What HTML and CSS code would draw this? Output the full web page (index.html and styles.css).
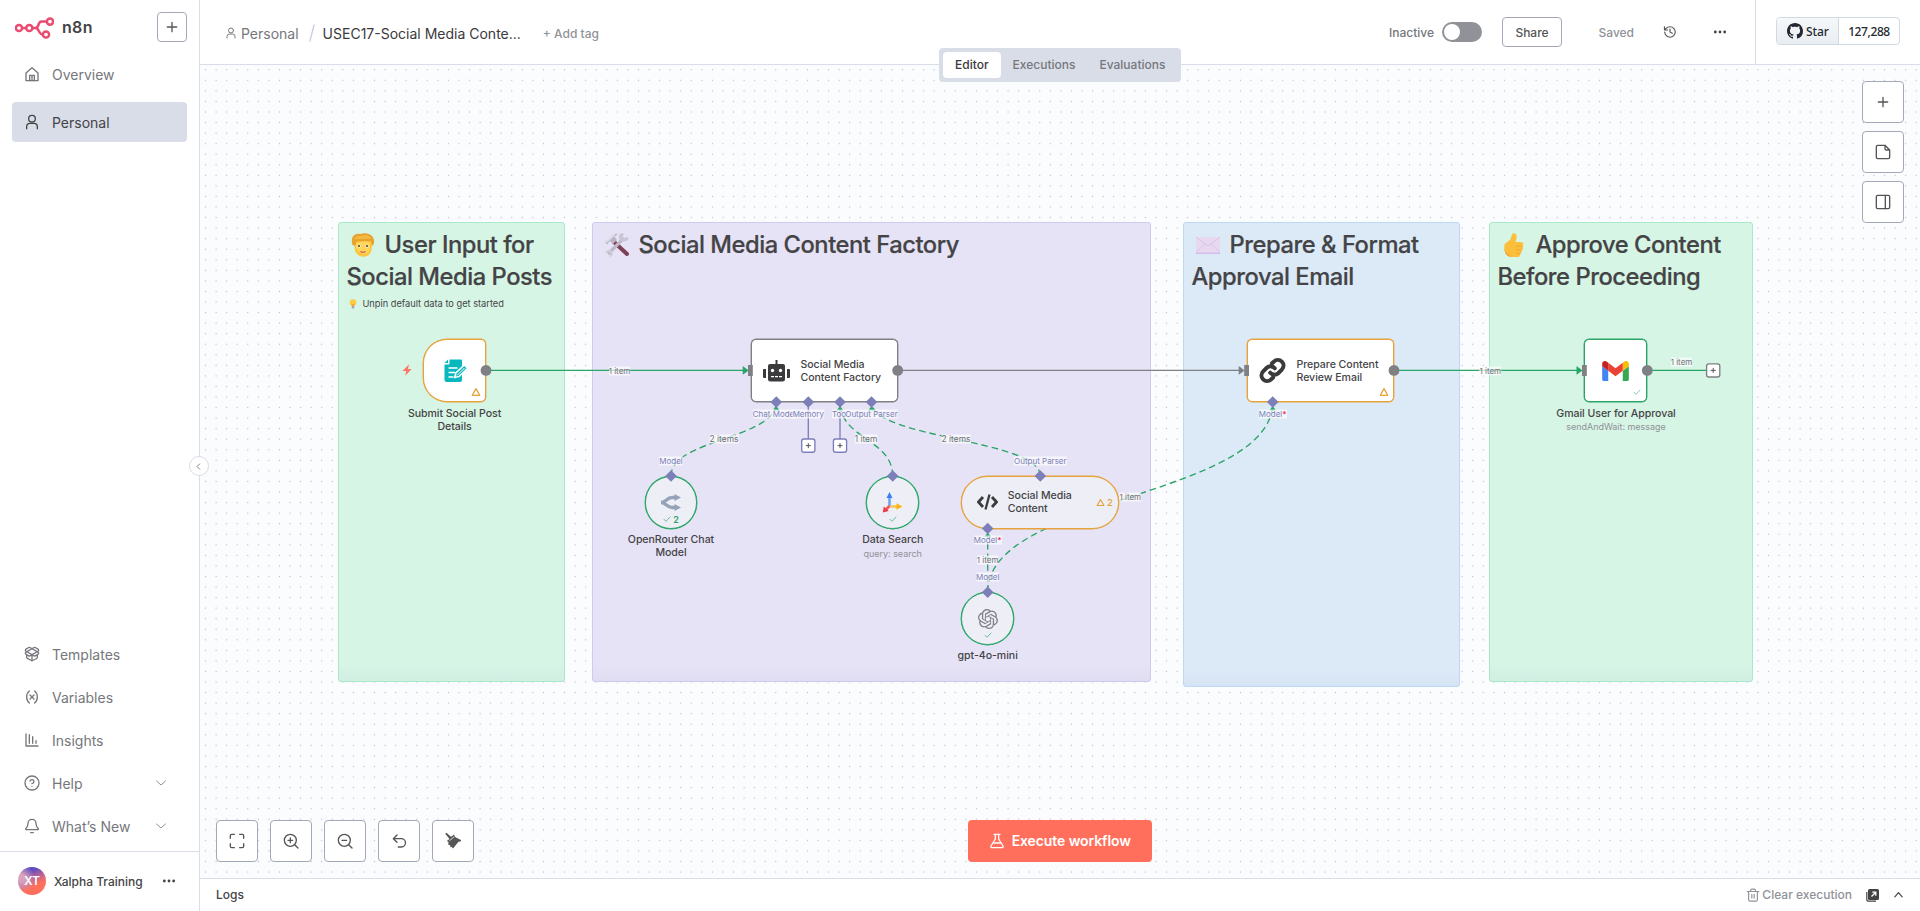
FILE: index.html
```html
<!DOCTYPE html>
<html lang="en">
<head>
<meta charset="utf-8">
<title>USEC17-Social Media Content - n8n</title>
<link rel="stylesheet" href="styles.css">
</head>
<body>
<svg class="defs" aria-hidden="true">
  <symbol id="i-plus" viewBox="0 0 24 24"><path d="M5 12h14M12 5v14"/></symbol>
  <symbol id="i-user" viewBox="0 0 24 24"><circle cx="12" cy="7" r="5"/><path d="M4 22v-3a5 5 0 0 1 5-5h6a5 5 0 0 1 5 5v3"/></symbol>
  <symbol id="i-chev" viewBox="0 0 24 24"><path d="m3 8 9 8 9-8"/></symbol>
  <symbol id="i-dots" viewBox="0 0 24 24"><g fill="currentColor" stroke="none"><circle cx="4" cy="12" r="2.400"/><circle cx="12" cy="12" r="2.400"/><circle cx="20" cy="12" r="2.400"/></g></symbol>
  <symbol id="i-warn" viewBox="0 0 24 24"><path d="M12 4 21 20H3Z"/></symbol>
  <symbol id="i-check" viewBox="0 0 24 24"><path d="m3 13 6 6L21 6"/></symbol>
</svg>
<div class="app">
  <aside class="sidebar">
    <div class="brand">
      <svg class="logo" viewBox="0 0 39 22" fill="none" stroke="#ea4b71" stroke-width="2.500"><circle cx="4" cy="11" r="3.100"/><circle cx="14.300" cy="11" r="3.100"/><circle cx="35" cy="4.600" r="3.100"/><circle cx="31" cy="17.500" r="3.100"/><path d="M7.100 11h4.100M17.400 11h3c4.500 0 1.500-6.400 6.500-6.400h5M20.400 11c4.500 0 2.500 6.500 7.500 6.500"/></svg>
      <span class="brand-name">n8n</span>
      <button class="btn add"><svg class="ic s16"><use href="#i-plus"/></svg></button>
    </div>
    <nav class="menu top">
      <a class="item"><svg class="ic s16" viewBox="0 0 24 24"><path d="M3 10.500 12 2.500l9 8V22H3Z"/><path d="M8.500 22v-8h7v8M12 15v7"/></svg><span>Overview</span></a>
      <a class="item active"><svg class="ic s16"><use href="#i-user"/></svg><span>Personal</span></a>
    </nav>
    <nav class="menu bottom">
      <a class="item"><svg class="ic s16" viewBox="0 0 24 24"><path d="M12 22v-9M15.170 2.210a1.670 1.670 0 0 1 1.630 0L21 4.570a1.930 1.930 0 0 1 0 3.360L8.820 14.790a1.660 1.660 0 0 1-1.640 0L3 12.430a1.930 1.930 0 0 1 0-3.360z"/><path d="M20 13v3.870a2.060 2.060 0 0 1-1.110 1.830l-6 3.080a1.930 1.930 0 0 1-1.780 0l-6-3.080A2.060 2.060 0 0 1 4 16.870V13"/><path d="M21 12.430a1.930 1.930 0 0 0 0-3.360L8.830 2.200a1.640 1.640 0 0 0-1.630 0L3 4.570a1.930 1.930 0 0 0 0 3.360l12.180 6.860a1.640 1.640 0 0 0 1.630 0z"/></svg><span>Templates</span></a>
      <a class="item"><svg class="ic s16" viewBox="0 0 24 24"><path d="M8 21s-4-3-4-9 4-9 4-9M16 3s4 3 4 9-4 9-4 9M15 9l-6 6M9 9l6 6"/></svg><span>Variables</span></a>
      <a class="item"><svg class="ic s16" viewBox="0 0 24 24"><path d="M3 3v18h18M8 4v13M13 7v10M18 13v4"/></svg><span>Insights</span></a>
      <a class="item"><svg class="ic s16" viewBox="0 0 24 24"><circle cx="12" cy="12" r="10.500"/><path d="M9.090 9a3 3 0 0 1 5.830 1c0 2-3 3-3 3M12 17h.01"/></svg><span>Help</span><svg class="ic chev"><use href="#i-chev"/></svg></a>
      <a class="item"><svg class="ic s16" viewBox="0 0 24 24"><path d="M10 22h4M3.300 15.300A1 1 0 0 0 4 17.500h16a1 1 0 0 0 .740-2.200C19.400 14 18 12 18 8A6 6 0 0 0 6 8c0 4-1.400 6-2.700 7.300"/></svg><span>What’s New</span><svg class="ic chev"><use href="#i-chev"/></svg></a>
    </nav>
    <div class="user">
      <span class="avatar">XT</span><span class="uname">Xalpha Training</span><svg class="ic s14"><use href="#i-dots"/></svg>
    </div>
    <button class="collapse"><svg class="ic" viewBox="0 0 24 24"><path d="m15 5-7 7 7 7"/></svg></button>
  </aside>
  <main class="main">
    <header class="header">
      <div class="crumbs">
        <svg class="ic cu"><use href="#i-user"/></svg><span class="proj">Personal</span>
        <svg class="slash" viewBox="0 0 6 18"><path d="M5.200.5.800 17.500"/></svg>
        <span class="wf">USEC17-Social Media Conte...</span><span class="tag">+ Add tag</span>
      </div>
      <div class="actions">
        <span class="inactive">Inactive</span><span class="toggle"></span>
        <button class="btn share">Share</button><span class="saved">Saved</span>
        <svg class="ic hist" viewBox="0 0 24 24"><path d="M3 12a9 9 0 1 0 9-9 9.750 9.750 0 0 0-6.740 2.740L2.500 8.500M2.500 3v5.500H8M12 7v5l4 2"/></svg>
        <svg class="ic s14 more"><use href="#i-dots"/></svg>
      </div>
      <div class="gh">
        <div class="ghb"><span class="star"><svg viewBox="0 0 16 16" width="16" height="16"><path fill="#24292f" d="M8 0C3.580 0 0 3.580 0 8c0 3.540 2.290 6.530 5.470 7.590.4.070.55-.17.55-.38 0-.19-.01-.82-.01-1.490-2.010.37-2.530-.49-2.690-.94-.09-.23-.48-.94-.82-1.130-.28-.15-.68-.52-.01-.53.63-.01 1.080.58 1.230.82.72 1.210 1.870.87 2.330.66.07-.52.28-.87.51-1.070-1.780-.2-3.640-.89-3.640-3.950 0-.87.31-1.590.82-2.150-.08-.2-.36-1.020.08-2.120 0 0 .67-.21 2.200.82.64-.18 1.320-.27 2-.27s1.360.09 2 .27c1.530-1.040 2.200-.82 2.200-.82.44 1.100.16 1.920.08 2.120.51.56.82 1.270.82 2.150 0 3.070-1.870 3.750-3.650 3.950.29.25.54.73.54 1.480 0 1.070-.01 1.930-.01 2.200 0 .21.15.46.55.38A8.010 8.010 0 0 0 16 8c0-4.420-3.580-8-8-8"/></svg>Star</span><span class="count">127,288</span></div>
      </div>
      <div class="tabs"><span class="tab on">Editor</span><span class="tab">Executions</span><span class="tab">Evaluations</span></div>
    </header>
    <section class="canvas">
      <svg class="grid" width="1720" height="813"><defs><pattern id="dots" x="0.260" y="-0.500" width="10.560" height="10.556" patternUnits="userSpaceOnUse"><circle cx="5.280" cy="5.280" r="0.640" fill="#b8bbc3"/></pattern></defs><rect width="1720" height="813" fill="url(#dots)"/></svg>

      <div class="sticky green st1">
        <h2><svg class="emoji" viewBox="0 0 24 24"><path fill="#fbc63d" d="M3 8h18.500l-1 9c-1 4.500-4.500 6.800-8 6.800S5 21.500 4 17.500Z"/><path fill="#ffd65a" d="M5 10c4 0 6-2 9-3l5 3v4c0 5-3 7-6.500 7S6 18 5 14Z"/><path fill="#e8a22e" d="M1.500 12C-1 4 4 0 9 1c6-2 13 0 14 6 .500 3-.500 4-1 6-1-1-1.500-2.500-2.500-5-5 1-10-.500-14 .500l-1.500 4.500Z"/><path fill="#f4b940" d="M3 6c4-5 9-2 11-4 3 0 6 2 6 4-5-1-11 1-17 0Z"/><circle cx="8" cy="13" r="1.500" fill="#fff"/><circle cx="16" cy="13" r="1.500" fill="#fff"/><circle cx="8" cy="13" r="1.100" fill="#5c3a30"/><circle cx="16" cy="13" r="1.100" fill="#5c3a30"/><path d="M9.500 18.500q2.500 1.500 5 0" fill="none" stroke="#d9475c" stroke-width="1.200"/></svg>User Input for<br>Social Media Posts</h2>
        <p><svg class="bulb" viewBox="0 0 8 10"><circle cx="4" cy="3.500" r="3.300" fill="#fcca45"/><path d="M2.600 5h2.800v2H2.600Z" fill="#f2a93b"/><path d="M2.800 7h2.400v2.500H2.800Z" fill="#a7a3b5"/></svg>Unpin default data to get started</p>
      </div>
      <div class="sticky purple st2">
        <h2><svg class="emoji" viewBox="0 0 24 24"><path d="m9 9 13 12" stroke="#7d4054" stroke-width="4" stroke-linecap="round"/><path d="M3 21 19 5" stroke="#bdb9c9" stroke-width="3.200"/><path d="M17 0c-3 1-4 4-2.500 6.500 2 2.500 6 3 9-.5l-1-2-3.500 1-1.500-1.500L19 1Z" fill="#c9c5d4"/><path d="M0 20c1-3 4-4 6.500-2.500 2 2 2 5-1 6.500l-1-.500L5.500 20 4 19Z" fill="#d0ccdb"/><path d="M0 9 9 1l4-.500L9.500 4 12 7 8 11 5 8 2 11.500Z" fill="#b9b4c4"/><path d="M0 9 9 1l1.500 1L2 9.500Z" fill="#e2dfea"/></svg>Social Media Content Factory</h2>
      </div>
      <div class="sticky blue st3">
        <h2><svg class="emoji" viewBox="0 0 24 24"><path fill="#e8d9f1" d="M0 4h24v17H0Z"/><path fill="#d6bdec" d="M0 19.500h24V21H0Z"/><path d="m0 4 12 9 12-9M0 19l9-8M24 19l-9-8" stroke="#cfbbe0" stroke-width=".7" fill="none"/></svg>Prepare &amp; Format<br>Approval Email</h2>
      </div>
      <div class="sticky green st4">
        <h2><svg class="emoji" viewBox="0 0 24 24"><path fill="#fbbf3a" d="M2.500 12c0-2 4-3 6-6L10 1.500c.5-2 4-1.500 4.500 1 .400 2.500-.5 4.500-1 6.500h5c3 0 3.500 3 2 4 1.500 1.500.5 3.500-1 4 1 1.500 0 3.500-1.500 3.500C18.500 23 17 24 15 24H9c-4-.5-7.500-4-6.500-12Z"/><path fill="#f0a031" d="M14 12.800h6v.8h-6Zm0 3.700h5.500v.8h-5.500Zm0 3.500h4.500v.8h-4.500ZM2.500 14c0 4 3 8 7 9.500H7c-3-1-5-5.500-4.500-9.500Z"/></svg>Approve Content<br>Before Proceeding</h2>
      </div>

      <svg class="edges" viewBox="200 65 1720 813" width="1720" height="813" fill="none" stroke-width="1.350">
        <g stroke="#2aa568">
          <path d="M486 370.400H744M1394 370.400H1579M1647 370.400H1706"/>
          <g stroke-dasharray="6.600 4">
            <path d="M671 476C671 439 776.300 439 776.300 402"/>
            <path d="M892.700 476C892.700 439 840 439 840 402"/>
            <path d="M1040.300 476C1040.300 439 871.500 439 871.500 402"/>
            <path d="M987.700 592V528"/>
            <path d="M987.700 592C987.700 497 1272.700 497 1272.700 402"/>
          </g>
        </g>
        <path stroke="#7f8084" d="M897.700 370.400H1240"/>
        <path stroke="#7d7fb8" d="M808.300 402V439M840 402V439"/>
        <g fill="#2aa568"><path d="m742.700 366 6 4.400-6 4.400ZM1576.500 366l6 4.400-6 4.400ZM773 410.500l3.300-4.500 3.300 4.500ZM836.700 410.500l3.300-4.500 3.300 4.500ZM868.200 410.500l3.300-4.500 3.300 4.500ZM1269.400 410.500l3.300-4.500 3.300 4.500ZM984.400 537l3.300-4.500 3.300 4.500Z"/></g>
        <path fill="#7f8084" d="m1238.700 366 6 4.400-6 4.400Z"/>
      </svg>

      <span class="lbl l1">1 item</span><span class="lbl l2">1 item</span><span class="lbl l3">1 item</span>
      <span class="lbl l4">2 items</span><span class="lbl l5">1 item</span><span class="lbl l6">2 items</span>
      <span class="lbl l7">1 item</span><span class="lbl l8">1 item</span>
      <span class="lbl v p1">Chat Model</span><span class="lbl v p2">Memory</span><span class="lbl v p3">Tool</span><span class="lbl v p4">Output Parser</span>
      <span class="lbl v p5">Model</span><span class="lbl v p6">Output Parser</span><span class="lbl v p7">Model<b>*</b></span><span class="lbl v p8">Model</span><span class="lbl v p9">Model<b>*</b></span>

      <div class="node submit warn">
        <svg width="24" height="24" viewBox="0 0 24 24"><path fill="#08b8bd" d="M5.500.5H17a1 1 0 0 1 1 1V21a2 2 0 0 1-2 2H2.500a2 2 0 0 1-2-2V5.500h4a1 1 0 0 0 1-1Z"/><path d="M.5 4 4 .5V4Z" fill="#08b8bd"/><path d="M4.500 9h9M4.500 13.500h6.500M4.500 18h5" stroke="#fff" stroke-width="1.500"/><path d="m10.800 18.500 1-4.500 8.500-8 3.200 3.200-8.200 8.200Z" fill="#08b8bd" stroke="#fff" stroke-width="1.500"/><path d="m13 16.500 7.500-7.500" stroke="#fff"/></svg>
        <svg class="ic stat"><use href="#i-warn"/></svg>
      </div>
      <svg class="bolt" viewBox="0 0 10 12"><path fill="#ff7769" d="M7 .3.500 7h3.700l-1 4.700L9.700 5H6Z"/></svg>
      <div class="cap c1">Submit Social Post<br>Details</div>

      <div class="node wide factory">
        <svg width="27" height="22" viewBox="0 0 27 22" fill="#3b3b3d"><path d="M12.500 0h2v4h5.500a2 2 0 0 1 2 2v13a2.500 2.500 0 0 1-2.500 2.500h-12A2.500 2.500 0 0 1 5 19V6a2 2 0 0 1 2-2h5.500ZM0 10.500A1 1 0 0 1 1 9h2v9H1a1 1 0 0 1-1-1ZM27 10.500A1 1 0 0 0 26 9h-2v9h2a1 1 0 0 0 1-1Z"/><g fill="#fff"><circle cx="9.500" cy="10.500" r="1.700"/><circle cx="17.500" cy="10.500" r="1.700"/><path d="M8 16h3v1.300H8ZM12 16h3v1.300h-3ZM16 16h3v1.300h-3Z"/></g></svg>
        <span>Social Media<br>Content Factory</span>
      </div>
      <div class="node wide review warn">
        <svg width="27" height="27" viewBox="0 0 24 24" fill="none" stroke="#3b3b3d" stroke-width="3.600" stroke-linecap="round"><path d="M10 14a5 5 0 0 0 7.100.400l3.200-3.200a5 5 0 0 0-7.100-7.100l-1.700 1.700M14 10a5 5 0 0 0-7.100-.4l-3.200 3.200a5 5 0 0 0 7.100 7.100l1.700-1.700"/></svg>
        <span>Prepare Content<br>Review Email</span>
        <svg class="ic stat"><use href="#i-warn"/></svg>
      </div>
      <div class="node gmail ok">
        <svg width="27" height="20" viewBox="52 42 88 66"><path fill="#4285f4" d="M58 108h14V74L52 59v43c0 3.320 2.690 6 6 6"/><path fill="#34a853" d="M120 108h14c3.320 0 6-2.690 6-6V59l-20 15"/><path fill="#fbbc04" d="M120 48v26l20-15v-8c0-7.420-8.470-11.650-14.400-7.200"/><path fill="#ea4335" d="M72 74V48l24 18 24-18v26L96 92"/><path fill="#c5221f" d="M52 51v8l20 15V48l-5.600-4.200c-5.940-4.450-14.400-.22-14.400 7.200"/></svg>
        <svg class="ic stat"><use href="#i-check"/></svg>
      </div>
      <div class="cap c2">Gmail User for Approval<small>sendAndWait: message</small></div>

      <div class="node round n-open">
        <svg width="20" height="17" viewBox="0 0 20 17" fill="none" stroke="#94a3b8" stroke-width="3.300"><path d="M0 8.500c5.500 0 5.500-5 11-5h3M0 8.500c5.500 0 5.500 5 11 5h3"/><path d="m13.500 0 6.500 3.500-6.500 3.500ZM13.500 10l6.500 3.500-6.500 3.500Z" fill="#94a3b8" stroke="none"/></svg>
        <span class="rs"><svg class="ic"><use href="#i-check"/></svg>2</span>
      </div>
      <div class="cap c3">OpenRouter Chat<br>Model</div>
      <div class="node round n-data">
        <svg width="21" height="21" viewBox="0 0 21 21"><path d="M7.500 14V5" stroke="#6fa2f5" stroke-width="2.600"/><path d="m7.500 0 3 6h-6Z" fill="#3d7ff0"/><path d="M8.500 14.500h6.500" stroke="#fcc648" stroke-width="2.600"/><path d="m20.500 14.500-6 3.200v-6.400Z" fill="#fbb418"/><path d="m7.500 14-4 4" stroke="#f5535c" stroke-width="2.600"/><path d="m.8 20.500 1-6 5 4.500Z" fill="#ee3a45"/></svg>
        <span class="rs"><svg class="ic"><use href="#i-check"/></svg></span>
      </div>
      <div class="cap c4">Data Search<small>query: search</small></div>
      <div class="node pill warn">
        <svg width="21" height="16" viewBox="0 0 21 16" fill="none" stroke="#3b3b3d" stroke-width="2.800"><path d="M6 3 1.500 8 6 13M15 3l4.500 5-4.500 5"/><path d="M12.500.5 8.500 15.500" stroke-width="2.300"/></svg>
        <span>Social Media<br>Content</span>
        <em><svg class="ic"><use href="#i-warn"/></svg>2</em>
      </div>
      <div class="node round n-gpt">
        <svg width="20" height="20" viewBox="0 0 24 24" fill="#7e8086"><path d="M22.280 9.820a5.980 5.980 0 0 0-.52-4.910 6.050 6.050 0 0 0-6.510-2.900A6.070 6.070 0 0 0 4.980 4.180a5.980 5.980 0 0 0-4 2.900 6.050 6.050 0 0 0 .74 7.100 5.980 5.980 0 0 0 .51 4.910 6.050 6.050 0 0 0 6.520 2.900A5.980 5.980 0 0 0 13.260 24a6.060 6.060 0 0 0 5.770-4.210 5.990 5.990 0 0 0 4-2.900 6.060 6.060 0 0 0-.75-7.070zm-9.020 12.610a4.480 4.480 0 0 1-2.880-1.040l.14-.08 4.780-2.760a.79.79 0 0 0 .39-.68v-6.740l2.020 1.170a.07.07 0 0 1 .04.050v5.580a4.500 4.500 0 0 1-4.490 4.490zm-9.660-4.130a4.470 4.470 0 0 1-.54-3.010l.14.090 4.780 2.760a.77.77 0 0 0 .78 0l5.840-3.370v2.330a.08.08 0 0 1-.03.060L9.740 19.950a4.500 4.500 0 0 1-6.140-1.650zM2.340 7.900a4.490 4.490 0 0 1 2.370-1.970V11.600a.77.77 0 0 0 .39.680l5.810 3.350-2.020 1.170a.08.08 0 0 1-.07 0l-4.830-2.790A4.500 4.500 0 0 1 2.340 7.870zm16.600 3.860-5.840-3.390L15.120 7.200a.08.08 0 0 1 .07 0l4.830 2.790a4.490 4.490 0 0 1-.68 8.100v-5.680a.79.79 0 0 0-.4-.65zm2.010-3.020-.14-.09-4.770-2.780a.78.78 0 0 0-.79 0L9.410 9.230V6.900a.07.07 0 0 1 .03-.06l4.830-2.790a4.500 4.500 0 0 1 6.680 4.660zM8.310 12.860l-2.020-1.160a.08.08 0 0 1-.04-.06V6.070a4.500 4.500 0 0 1 7.380-3.450l-.14.080-4.780 2.760a.79.79 0 0 0-.39.680zm1.100-2.370 2.600-1.500 2.610 1.500v3l-2.600 1.500-2.610-1.500z"/></svg>
        <span class="rs"><svg class="ic"><use href="#i-check"/></svg></span>
      </div>
      <div class="cap c5">gpt-4o-mini</div>

      <svg class="edges" viewBox="200 65 1720 813" width="1720" height="813">
        <g fill="#7f8084"><circle cx="486" cy="370.400" r="5.400"/><circle cx="897.700" cy="370.400" r="5.400"/><circle cx="1394" cy="370.400" r="5.400"/><circle cx="1647.300" cy="370.400" r="5.400"/><path d="M748 365h4.800v11H748ZM1244.200 365h4.800v11h-4.800ZM1582 365h4.800v11H1582Z"/></g>
        <path fill="#7d7fb8" d="m776.300 396.200 5.800 5.800-5.800 5.800-5.800-5.800Zm32 0 5.800 5.800-5.800 5.800-5.800-5.800Zm31.700 0 5.800 5.800-5.800 5.800-5.800-5.800Zm31.500 0 5.800 5.800-5.800 5.800-5.800-5.800Zm401.200 0 5.800 5.800-5.800 5.800-5.800-5.800ZM671 470.200l5.800 5.800-5.800 5.800-5.800-5.800Zm221.700 0 5.800 5.800-5.800 5.800-5.800-5.800Zm147.600 0 5.800 5.800-5.800 5.800-5.800-5.800ZM987.700 522.700l5.800 5.800-5.800 5.800-5.800-5.800Zm0 63.800 5.800 5.800-5.800 5.800-5.800-5.800Z"/>
        <g fill="#fff" stroke="#7d7fb8" stroke-width="1.350"><rect x="801.700" y="439" width="13.200" height="13.200" rx="2.200"/><rect x="833.400" y="439" width="13.200" height="13.200" rx="2.200"/><rect x="1706.600" y="363.800" width="13.200" height="13.200" rx="2.200" stroke="#7f8084"/></g>
        <path d="M805.800 445.600h5M808.300 443.100v5M837.500 445.600h5M840 443.100v5M1710.700 370.400h5M1713.200 367.900v5" stroke="#555" stroke-width="1"/>
      </svg>

      <div class="side">
        <button class="btn sq"><svg class="ic s16"><use href="#i-plus"/></svg></button>
        <button class="btn sq"><svg class="ic s16" viewBox="0 0 24 24"><path d="M15 2H4a2 2 0 0 0-2 2v16a2 2 0 0 0 2 2h16a2 2 0 0 0 2-2V9ZM15 2v5a2 2 0 0 0 2 2h5"/></svg></button>
        <button class="btn sq"><svg class="ic s16" viewBox="0 0 24 24"><rect x="2" y="2" width="20" height="20" rx="2"/><path d="M15.500 2v20"/></svg></button>
      </div>
      <div class="controls">
        <button class="btn sq"><svg class="ic s16" viewBox="0 0 24 24"><path d="M8 2H4a2 2 0 0 0-2 2v4M22 8V4a2 2 0 0 0-2-2h-4M2 16v4a2 2 0 0 0 2 2h4M16 22h4a2 2 0 0 0 2-2v-4"/></svg></button>
        <button class="btn sq"><svg class="ic s16" viewBox="0 0 24 24"><circle cx="11" cy="11" r="9"/><path d="m22.500 22.500-5-5M11 7.500v7M7.500 11h7"/></svg></button>
        <button class="btn sq"><svg class="ic s16" viewBox="0 0 24 24"><circle cx="11" cy="11" r="9"/><path d="m22.500 22.500-5-5M7.500 11h7"/></svg></button>
        <button class="btn sq"><svg class="ic s16" viewBox="0 0 24 24"><path d="M9 14 3.500 8.500 9 3M3.500 8.500h12a6 6 0 0 1 0 12.500H11"/></svg></button>
        <button class="btn sq"><svg width="18" height="18" viewBox="0 0 18 18" fill="#555"><path d="M1.200 1.800 2.400.8l4.600 4 3.200-2.300.8 2.500 6 3-.3 1.500-2.200.3-5.500 6.700-1.500-1.700-.8.700-.8-2.500-1.700-.3.300-2.700L2.800 9l2.700-2Z"/><path d="m5.500 8.800 4.800-4.300" stroke="#fff" stroke-width=".8"/></svg></button>
      </div>
      <button class="exec"><svg class="ic s16" viewBox="0 0 24 24"><path d="M9.500 2v7L3 19.500A1.700 1.700 0 0 0 4.500 22h15a1.700 1.700 0 0 0 1.500-2.500L14.500 9V2M7.500 2h9M6.500 15h11"/></svg>Execute workflow</button>
    </section>
    <footer class="logs">
      <span class="lt">Logs</span>
      <span class="clear"><svg class="ic s14" viewBox="0 0 24 24"><path d="M2 6h20M4.500 6v14a2.500 2.500 0 0 0 2.500 2.500h10a2.500 2.500 0 0 0 2.500-2.500V6M8 6V4a2 2 0 0 1 2-2h4a2 2 0 0 1 2 2v2M10 11v6M14 11v6"/></svg>Clear execution</span>
      <svg class="pop" viewBox="0 0 14 14"><path d="M3.500 1h8A1.500 1.500 0 0 1 13 2.500v8a1.500 1.500 0 0 1-1.500 1.500h-8A1.500 1.500 0 0 1 2 10.500v-8A1.500 1.500 0 0 1 3.500 1Z" fill="#444"/><path d="M.8 4v7.500a1.700 1.700 0 0 0 1.700 1.700H10" fill="none" stroke="#444" stroke-width="1.200"/><path d="m5.500 8.500 4-4M6.300 4.200h3.500v3.500" fill="none" stroke="#fff" stroke-width="1.300"/></svg>
      <svg class="ic up" viewBox="0 0 24 24"><path d="m4 17 8-9 8 9"/></svg>
    </footer>
  </main>
</div>
</body>
</html>
```
FILE: styles.css
```css
* { box-sizing: border-box; }
body { margin: 0; font-family: Inter, "Liberation Sans", sans-serif; font-size: 14px; color: #444446; overflow: hidden; }
button { font-family: inherit; margin: 0; padding: 0; cursor: pointer; }
.defs { position: absolute; width: 0; height: 0; }
.ic { fill: none; stroke: currentColor; stroke-width: 2; stroke-linecap: round; stroke-linejoin: round; flex: none; }
.s16 { width: 16px; height: 16px; }
.s14 { width: 14px; height: 14px; }
.btn { display: flex; align-items: center; justify-content: center; background: #fff; border: 1px solid #a5a8b8; border-radius: 4px; color: #555; }

.app { display: flex; width: 1920px; height: 911px; background: #fff; }
.sidebar { position: relative; display: flex; flex-direction: column; width: 200px; border-right: 1px solid #d9dde8; }
.brand { display: flex; align-items: center; padding: 12px 12px 0 15px; }
.logo { width: 39px; height: 22px; margin-top: 2px; }
.brand-name { margin-left: 8px; font-size: 16px; font-weight: 600; letter-spacing: .3px; flex: 1; }
.add { width: 30px; height: 30px; }
.menu { display: flex; flex-direction: column; }
.menu.top { padding: 12px 12px 0; gap: 8px; }
.menu.bottom { margin-top: auto; padding: 0 12px 5px; gap: 3px; }
.item { display: flex; align-items: center; height: 40px; padding: 0 12px; color: #76777c; border-radius: 4px; }
.item span { margin-left: 12px; flex: 1; }
.item.active { background: #d9dde8; color: #444446; }
.menu.bottom .item { padding-right: 20px; }
.chev { width: 12px; height: 12px; color: #909298; }
.user { display: flex; align-items: center; height: 60px; padding: 0 23px 1px 18px; border-top: 1px solid #d9dde8; font-size: 12px; font-weight: 500; }
.avatar { width: 28px; height: 28px; border-radius: 50%; color: #fff; font-weight: 600; line-height: 28px; text-align: center; background: radial-gradient(circle at 12% 40%, #d9a3bd 0 12%, transparent 45%), linear-gradient(155deg, #5b4bc4 22%, #c66590 48%, #ff6f5c 65%); }
.uname { margin-left: 8px; flex: 1; white-space: nowrap; }
.collapse { position: absolute; right: -9.500px; top: 456px; display: flex; align-items: center; justify-content: center; width: 20px; height: 20px; border: 1px solid #d9dde8; border-radius: 50%; background: #fff; color: #555; z-index: 3; }
.collapse svg { width: 9px; height: 9px; }

.main { display: flex; flex-direction: column; width: 1720px; }
.header { position: relative; display: flex; height: 65px; border-bottom: 1px solid #d9dde8; }
.crumbs { display: flex; align-items: center; padding: 2px 0 0 25px; flex: 1; white-space: nowrap; }
.cu { width: 12px; height: 12px; color: #76777c; }
.proj { margin-left: 4px; color: #76777c; }
.slash { width: 6px; height: 18px; margin: 0 8px 0 10px; fill: none; stroke: #c9cede; stroke-width: 1.300; }
.wf { color: #3a3a3c; }
.tag { margin-left: 22px; font-size: 12px; font-weight: 500; color: #909298; }
.actions { display: flex; align-items: center; width: 366px; font-size: 12px; }
.inactive { color: #76777c; width: 53px; font-size: 12px; font-weight: 500; padding-top: 1px; }
.toggle { width: 40px; height: 20px; border-radius: 10px; background: #909298; padding: 2px; }
.toggle::before { content: ""; display: block; width: 16px; height: 16px; border-radius: 50%; background: #fff; }
.share { width: 60px; height: 30px; margin-left: 20px; font-size: 12px; font-weight: 500; }
.saved { margin-left: 36.500px; width: 64.500px; color: #909298; font-weight: 500; }
.hist { width: 14px; height: 14px; color: #555; }
.more { margin-left: 36px; color: #444; }
.gh { display: flex; align-items: center; width: 165px; padding: 0 0 2px 20px; border-left: 1px solid #d9dde8; }
.ghb { display: flex; height: 28px; width: 124px; border: 1px solid #d1d9e0; border-radius: 4px; overflow: hidden; color: #24292f; font: 500 12px "Noto Sans", sans-serif; letter-spacing: -.4px; }
.star { display: flex; align-items: center; gap: 3px; width: 62px; padding-left: 10px; background: linear-gradient(#f6f8fa, #e9edf2); border-right: 1px solid #d1d9e0; letter-spacing: -.1px; }
.count { flex: 1; line-height: 27px; text-align: center; }
.tabs { position: absolute; left: 739px; top: 48px; display: flex; height: 34px; padding: 4px; border-radius: 4px; background: #d9dde8; z-index: 2; }
.tab { height: 26px; line-height: 26px; padding: 0 12px; border-radius: 4px; font-size: 12px; font-weight: 500; color: #76777c; }
.tab.on { background: #fff; color: #3a3a3c; }

.canvas { position: relative; height: 813px; background: #fbfcfe; overflow: hidden; }
.grid, .edges { position: absolute; left: 0; top: 0; }
.edges { pointer-events: none; }
.sticky { position: absolute; top: 157.300px; height: 459.500px; border: 1px solid; border-radius: 3px; padding: 5.500px 8px; }
.sticky::after { content: ""; position: absolute; left: 0; right: 0; bottom: 0; height: 16px; background: linear-gradient(transparent, rgba(60, 90, 160, .045)); }
.green { background: #d7f5e5; border-color: #a9e8c8; }
.purple { background: #e7e3f6; border-color: #d0caee; }
.blue { background: #dceaf8; border-color: #bfd7f0; }
.st1 { left: 138px; width: 227.400px; }
.st2 { left: 392px; width: 559.200px; }
.st3 { left: 983px; width: 277px; height: 464.500px; }
.st4 { left: 1289px; width: 264px; }
.sticky h2 { margin: 0 0 0 -.5px; font-size: 23.760px; line-height: 32px; font-weight: 500; letter-spacing: -.480px; -webkit-text-stroke: .2px #444446; white-space: nowrap; color: #444446; }
.sticky p { margin: 3px 0 0; padding-left: 1.500px; font-size: 9.240px; line-height: 16px; color: #444446; white-space: nowrap; }
.emoji { width: 24px; height: 24px; vertical-align: -4px; margin: 0 10px 0 4px; }
.bulb { width: 8px; height: 10px; vertical-align: -2px; margin-right: 6px; }

.lbl { position: absolute; transform: translate(-50%, -50%); font-size: 8px; line-height: 9px; white-space: nowrap; color: #707176; background: rgba(251, 252, 254, .7); }
.lbl.v { color: #7d7fb8; }
.lbl b { color: #f02d52; font-weight: 600; }
.l1 { left: 419.500px; top: 305.500px; }
.l2 { left: 1290.300px; top: 305.500px; }
.l3 { left: 1481.500px; top: 297px; }
.l4 { left: 524px; top: 374px; }
.l5 { left: 666px; top: 374px; }
.l6 { left: 756px; top: 374px; }
.l7 { left: 930.300px; top: 432px; }
.l8 { left: 787.700px; top: 495px; }
.l4, .l5, .l6 { font-size: 8.400px; }
.p1 { left: 574.500px; top: 349px; }
.p2 { left: 608.300px; top: 349px; }
.p3 { left: 640px; top: 349px; }
.p4 { left: 671.500px; top: 349px; }
.p5 { left: 471px; top: 396px; }
.p6 { left: 840.300px; top: 396px; }
.p7 { left: 787.700px; top: 475px; }
.p8 { left: 787.700px; top: 512px; }
.p9 { left: 1072.700px; top: 349px; }

.node { --line: #7f8084; position: absolute; top: 274px; display: flex; align-items: center; justify-content: center; width: 63px; height: 63px; border: 1px solid var(--line); box-shadow: 0 0 0 .4px var(--line); border-radius: 5px; background: #fff; font-size: 10.560px; line-height: 13px; font-weight: 500; letter-spacing: -.03px; white-space: nowrap; }
.warn { --line: #e6a23c; }
.ok { --line: #2aa568; }
.stat { position: absolute; right: 4px; bottom: 4px; width: 10px; height: 10px; color: #e6a23c; stroke-width: 3; }
.ok .stat { color: #6cc398; right: 5px; width: 8px; stroke-width: 2.600; }
.submit { left: 223px; border-radius: 24px 5px 5px 24px; padding-left: 3px; }
.wide { width: 147px; justify-content: flex-start; padding-left: 11.500px; }
.wide span { margin-left: 10.500px; }
.factory { left: 550.500px; }
.review { left: 1046.500px; }
.gmail { left: 1384.300px; }
.round { --line: #2aa568; top: 411px; width: 52.600px; height: 52.600px; border-radius: 50%; background: #eeeff6; }
.n-open { left: 444.700px; }
.n-data { left: 666.400px; }
.n-gpt { left: 761.400px; top: 527.300px; }
.rs { position: absolute; left: 0; right: 0; bottom: 2px; display: flex; align-items: center; justify-content: center; gap: 2px; color: #2aa568; font-size: 9px; font-weight: 600; line-height: 13px; height: 13px; }
.rs svg { width: 8px; height: 8px; }
.pill { left: 761.300px; top: 411px; width: 158px; height: 52.600px; border-radius: 27px; background: #eeeff6; justify-content: flex-start; padding-left: 15px; }
.pill span { margin-left: 9.500px; flex: 1; }
.pill em { display: flex; align-items: center; gap: 2px; margin-right: 5.500px; font-style: normal; color: #e6a23c; font-size: 9.500px; }
.pill em svg { width: 9px; height: 9px; stroke-width: 3; }
.bolt { position: absolute; left: 202px; top: 299px; width: 10px; height: 12px; }
.cap { position: absolute; transform: translateX(-50%); text-align: center; font-size: 10.560px; line-height: 13px; font-weight: 500; letter-spacing: -.03px; white-space: nowrap; }
.cap small { display: block; font-size: 9px; font-weight: 400; color: #909298; line-height: 14px; }
.c1 { left: 254.600px; top: 342px; }
.c2 { left: 1416px; top: 342px; }
.c3 { left: 471px; top: 468px; }
.c4 { left: 692.700px; top: 468px; }
.c4 small { line-height: 16px; }
.c5 { left: 787.700px; top: 584px; }

.sq { width: 42px; height: 42px; }
.side { position: absolute; right: 16px; top: 16px; display: flex; flex-direction: column; gap: 8px; }
.controls { position: absolute; left: 16px; bottom: 16px; display: flex; gap: 12px; }
.exec { position: absolute; left: 768px; bottom: 16px; display: flex; align-items: center; justify-content: center; gap: 7px; width: 183.500px; height: 42px; border: 0; border-radius: 4px; padding: 0 0 1px; background: #ff6f5c; color: #fff; font-size: 14px; font-weight: 600; letter-spacing: -.1px; }
.logs { display: flex; align-items: center; height: 33px; padding: 0 16px 1px; border-top: 1px solid #d9dde8; font-size: 12px; font-weight: 500; }
.lt { flex: 1; }
.clear { display: flex; align-items: center; gap: 2px; color: #909298; }
.pop { width: 14px; height: 14px; margin-left: 14px; }
.up { width: 11px; height: 11px; margin-left: 13px; stroke-width: 2.600; color: #444; }
```
